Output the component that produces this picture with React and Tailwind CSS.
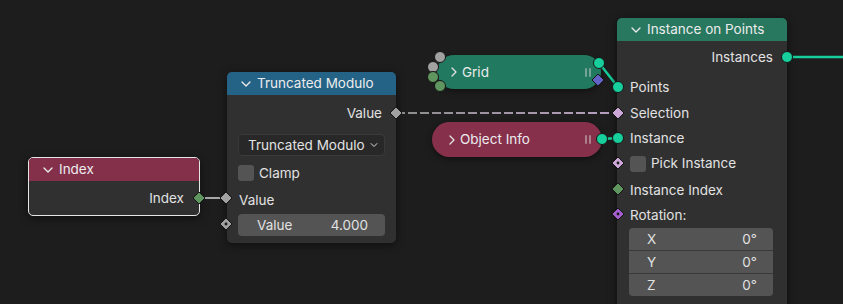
import React from 'react'

function ChevronDown({ className = '' }) {
  return (
    <svg width="10" height="6" viewBox="0 0 10 6" className={className}>
      <path d="M1 1l4 4 4-4" fill="none" stroke="currentColor" strokeWidth="1.3" strokeLinecap="round" strokeLinejoin="round" />
    </svg>
  )
}

function ChevronRight({ className = '' }) {
  return (
    <svg width="6" height="10" viewBox="0 0 6 10" className={className}>
      <path d="M1 1l4 4-4 4" fill="none" stroke="currentColor" strokeWidth="1.3" strokeLinecap="round" strokeLinejoin="round" />
    </svg>
  )
}

function Grip() {
  return (
    <div className="flex gap-[2px] opacity-50">
      <div className="w-[2px] h-[9px] bg-[#cfcfcf] rounded-[1px]" />
      <div className="w-[2px] h-[9px] bg-[#cfcfcf] rounded-[1px]" />
    </div>
  )
}

function Checkbox() {
  return <div className="w-[16px] h-[16px] rounded-[3px] bg-[#545454] shrink-0" />
}

function Circle({ x, y, r = 5.5, fill }) {
  return <circle cx={x} cy={y} r={r} fill={fill} stroke="#161616" strokeWidth="1" />
}

function Diamond({ x, y, s = 6, fill, dot }) {
  return (
    <g>
      <path d={`M${x} ${y - s}L${x + s} ${y}L${x} ${y + s}L${x - s} ${y}Z`} fill={fill} stroke="#161616" strokeWidth="1" />
      {dot && <circle cx={x} cy={y} r="1.4" fill="#1a1a1a" />}
    </g>
  )
}

const TEAL = '#17cf9c'
const GREY = '#a1a1a1'
const GREEN = '#5f955f'
const LILAC = '#cca6d6'

export default function App() {
  return (
    <div className="relative w-[843px] h-[304px] overflow-hidden bg-[#1d1d1d] font-['Inter',sans-serif] text-[13.5px] text-[#e2e2e2]">
      {/* links, under the nodes */}
      <svg className="absolute inset-0" width="843" height="304">
        <defs>
          <linearGradient id="sel" x1="396" y1="0" x2="618" y2="0" gradientUnits="userSpaceOnUse">
            <stop offset="0" stopColor="#8c8c8c" />
            <stop offset="1" stopColor="#b89fc0" />
          </linearGradient>
        </defs>
        <line x1="396" y1="113" x2="618" y2="113" stroke="url(#sel)" strokeWidth="2" strokeDasharray="9 3" />
        <line x1="199" y1="198" x2="226" y2="198" stroke="#a8a8a8" strokeWidth="2" />
        <line x1="787" y1="57" x2="843" y2="57" stroke={TEAL} strokeWidth="2.5" />
        <line x1="599" y1="63" x2="618" y2="87" stroke={TEAL} strokeWidth="2.5" />
        <line x1="602" y1="139" x2="618" y2="138" stroke={TEAL} strokeWidth="2.5" />
      </svg>

      {/* Index */}
      <div className="absolute left-[28px] top-[157px] w-[172px] h-[59px] rounded-[5px] border border-[#e6e6e6] bg-[#303030] overflow-hidden shadow-[0_2px_8px_rgba(0,0,0,0.5)]">
        <div className="h-[23px] bg-[#84304b] flex items-center pl-[14px] gap-[6px] text-[#ececec]">
          <ChevronDown />
          <span>Index</span>
        </div>
        <div className="h-[24px] mt-[5px] flex items-center justify-end pr-[15px]">Index</div>
      </div>

      {/* Truncated Modulo */}
      <div className="absolute left-[227px] top-[72px] w-[169px] h-[171px] rounded-[5px] bg-[#303030] overflow-hidden shadow-[0_2px_8px_rgba(0,0,0,0.5)]">
        <div className="h-[23px] bg-[#246386] flex items-center pl-[14px] gap-[6px] text-[#ececec]">
          <ChevronDown />
          <span>Truncated Modulo</span>
        </div>
        <div className="h-[24px] mt-[6px] flex items-center justify-end pr-[14px]">Value</div>
        <div className="mt-[9px] mx-[11px] h-[22px] rounded-[4px] bg-[#282828] border border-[#3a3a3a] flex items-center justify-between pl-[9px] pr-[5px]">
          <span>Truncated Modulo</span>
          <ChevronDown className="scale-75" />
        </div>
        <div className="h-[24px] mt-[5px] flex items-center gap-[5px] pl-[11px]">
          <Checkbox />
          <span>Clamp</span>
        </div>
        <div className="h-[24px] mt-[3px] flex items-center pl-[12px]">Value</div>
        <div className="mt-[2px] mx-[11px] h-[22px] rounded-[4px] bg-[#545454] flex items-center justify-between pl-[19px] pr-[17px]">
          <span>Value</span>
          <span>4.000</span>
        </div>
      </div>

      {/* Grid (collapsed) */}
      <div className="absolute left-[437px] top-[55px] w-[164px] h-[34px] rounded-full bg-[#217a5f] flex items-center pl-[14px] pr-[10px] shadow-[0_2px_6px_rgba(0,0,0,0.45)]">
        <ChevronRight />
        <span className="ml-[5px] text-[#ececec]">Grid</span>
        <div className="ml-auto"><Grip /></div>
      </div>

      {/* Object Info (collapsed) */}
      <div className="absolute left-[432px] top-[122px] w-[170px] h-[35px] rounded-full bg-[#86304c] flex items-center pl-[17px] pr-[11px] shadow-[0_2px_6px_rgba(0,0,0,0.45)]">
        <ChevronRight />
        <span className="ml-[5px] text-[#ececec]">Object Info</span>
        <div className="ml-auto"><Grip /></div>
      </div>

      {/* Instance on Points */}
      <div className="absolute left-[617px] top-[18px] w-[170px] h-[300px] rounded-[5px] bg-[#303030] overflow-hidden shadow-[0_2px_10px_rgba(0,0,0,0.55)]">
        <div className="h-[23px] bg-[#28775f] flex items-center pl-[14px] gap-[6px] text-[#ececec]">
          <ChevronDown />
          <span>Instance on Points</span>
        </div>
        <div className="h-[24px] mt-[4px] flex items-center justify-end pr-[14px]">Instances</div>
        <div className="h-[25px] mt-[6px] flex items-center pl-[13px]">Points</div>
        <div className="h-[25px] mt-[1px] flex items-center pl-[13px]">Selection</div>
        <div className="h-[25px] flex items-center pl-[13px]">Instance</div>
        <div className="h-[25px] flex items-center gap-[5px] pl-[13px]">
          <Checkbox />
          <span>Pick Instance</span>
        </div>
        <div className="h-[26px] mt-[1px] flex items-center pl-[13px]">Instance Index</div>
        <div className="h-[25px] flex items-center pl-[13px]">Rotation:</div>
        <div className="mx-[12px] w-[144px] rounded-[4px] overflow-hidden bg-[#3a3a3a] flex flex-col gap-[1px]">
          {['X', 'Y', 'Z'].map(a => (
            <div key={a} className="h-[22px] bg-[#545454] flex items-center justify-between pl-[18px] pr-[16px]">
              <span>{a}</span>
              <span>0°</span>
            </div>
          ))}
        </div>
      </div>

      {/* sockets, over the nodes */}
      <svg className="absolute inset-0 pointer-events-none" width="843" height="304">
        <Diamond x={199} y={198} s={6} fill={GREEN} />
        <Diamond x={396} y={113} s={6} fill={GREY} />
        <Diamond x={226} y={198} s={6} fill={GREY} />
        <Diamond x={226} y={224} s={6} fill={GREY} dot />

        <Circle x={440} y={57} r={5.5} fill={GREY} />
        <Circle x={433} y={67} r={5.5} fill={GREY} />
        <Circle x={433} y={77} r={5.5} fill={GREEN} />
        <Circle x={440} y={86} r={5.5} fill={GREEN} />
        <Circle x={599} y={63} r={5.5} fill={TEAL} />
        <Diamond x={598} y={80} s={6} fill="#6363c7" />

        <Circle x={602} y={139} r={5.5} fill={TEAL} />

        <Circle x={787} y={57} r={5.5} fill={TEAL} />
        <Circle x={618} y={87} r={5.5} fill={TEAL} />
        <Diamond x={618} y={113} s={6} fill={LILAC} />
        <Circle x={618} y={138} r={5.5} fill={TEAL} />
        <Diamond x={618} y={163} s={6} fill={LILAC} dot />
        <Diamond x={618} y={189} s={6} fill={GREEN} />
        <Diamond x={618} y={214} s={6} fill="#a35fcf" dot />
      </svg>
    </div>
  )
}
